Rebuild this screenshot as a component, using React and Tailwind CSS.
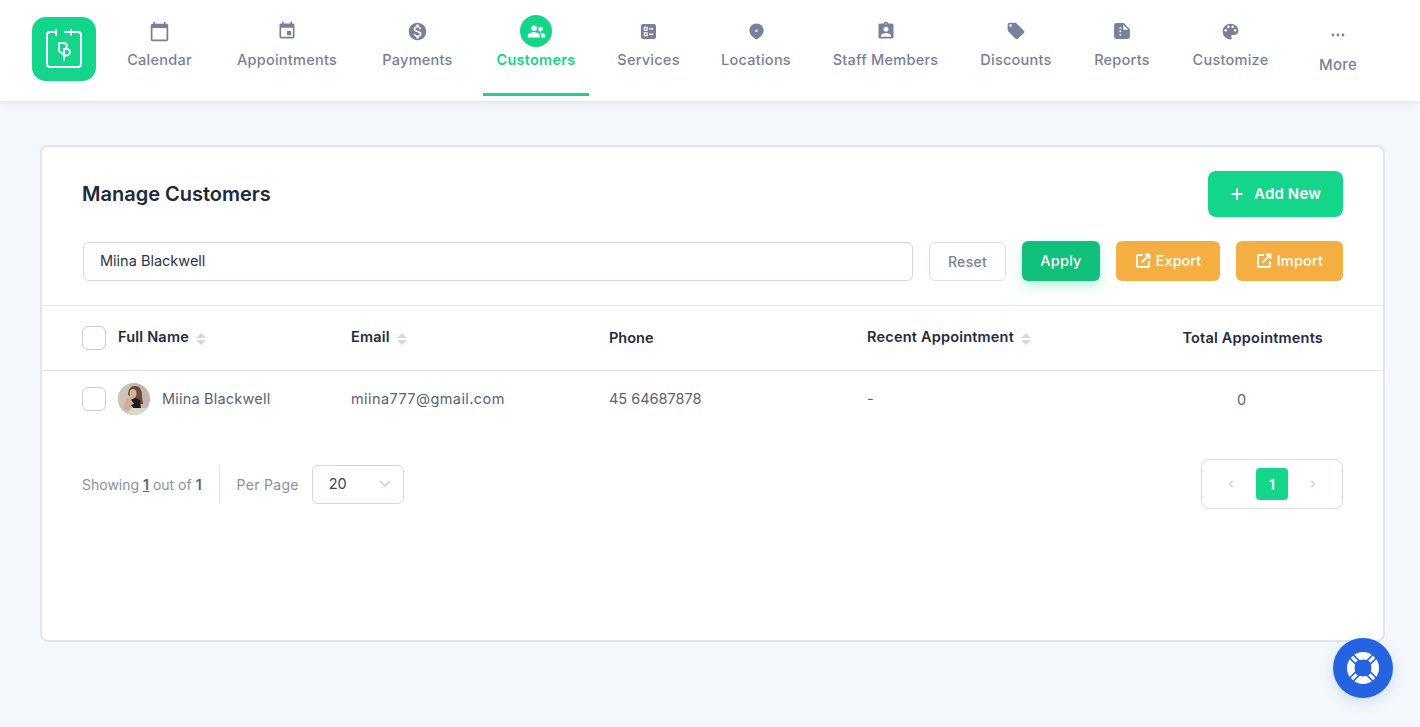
import React from "react";

const I = ({ d, className = "w-6 h-6", rule }) => (
  <svg viewBox="0 0 24 24" fill="currentColor" className={className}>
    <path d={d} fillRule={rule} clipRule={rule} />
  </svg>
);

const paths = {
  calendar: "M20 3h-1V1h-2v2H7V1H5v2H4c-1.1 0-2 .9-2 2v16c0 1.1.9 2 2 2h16c1.1 0 2-.9 2-2V5c0-1.1-.9-2-2-2zm0 18H4V8h16v13z",
  event: "M17 12h-5v5h5v-5zM16 1v2H8V1H6v2H5c-1.11 0-1.99.9-1.99 2L3 19c0 1.1.89 2 2 2h14c1.1 0 2-.9 2-2V5c0-1.1-.9-2-2-2h-1V1h-2zm3 18H5V8h14v11z",
  money: "M12 2C6.48 2 2 6.48 2 12s4.48 10 10 10 10-4.48 10-10S17.52 2 12 2zm1.41 16.09V20h-2.67v-1.93c-1.71-.36-3.16-1.46-3.27-3.4h1.96c.1 1.05.82 1.87 2.65 1.87 1.96 0 2.4-.98 2.4-1.59 0-.83-.44-1.61-2.67-2.14-2.48-.6-4.18-1.62-4.18-3.67 0-1.72 1.39-2.84 3.11-3.21V4h2.67v1.95c1.86.45 2.79 1.86 2.85 3.39H14.3c-.05-1.11-.64-1.87-2.22-1.87-1.5 0-2.4.68-2.4 1.64 0 .84.65 1.39 2.67 1.91s4.18 1.39 4.18 3.91c-.01 1.83-1.38 2.83-3.12 3.16z",
  people: "M9 4.500a3.500 3.500 0 1 1 0 7 3.500 3.500 0 0 1 0-7zM17 6a3 3 0 1 1 0 6 3 3 0 0 1 0-6zM9 13c3.500 0 7 1.500 7 4v2.500H1V17c0-2.500 4.500-4 8-4zM17 13.500c3 0 6 1.300 6 3.500v2.500h-5V17c0-1.400-.6-2.600-1.700-3.500z",
  services: "M5 2.500h14A2.500 2.500 0 0 1 21.500 5v14a2.500 2.500 0 0 1-2.500 2.500H5A2.500 2.500 0 0 1 2.500 19V5A2.500 2.500 0 0 1 5 2.500zM6 6v5h5V6H6zm1.500 1.500h2v2h-2v-2zM13 7.500V9.500h5V7.500h-5zM6 13v5h5v-5H6zm1.500 1.500h2v2h-2v-2zM13 14.500v2h5v-2h-5z",
  place: "M12 2C7 2 3 6 3 11c0 5.500 7 10 9 11 2-1 9-5.500 9-11 0-5-4-9-9-9zm0 7.500a1.500 1.500 0 1 1 0 3 1.500 1.500 0 0 1 0-3z",
  staff: "M19 3h-4.180C14.400 1.840 13.300 1 12 1c-1.300 0-2.400.840-2.820 2H5c-.140 0-.270.010-.400.040-.390.080-.740.280-1.010.550-.180.180-.330.400-.430.640-.100.230-.160.490-.160.770v14c0 .270.060.540.160.780s.250.450.430.640c.270.270.620.470 1.010.550.130.020.260.030.400.030h14c1.100 0 2-.900 2-2V5c0-1.100-.900-2-2-2zm-7-.250c.410 0 .750.340.750.750s-.340.750-.750.750-.750-.340-.750-.750.340-.750.750-.750zM12 7c1.660 0 3 1.340 3 3s-1.340 3-3 3-3-1.340-3-3 1.340-3 3-3zm6 12H6v-1.400c0-2 4-3.100 6-3.100s6 1.100 6 3.100V19z",
  tag: "M21.410 11.580l-9-9C12.050 2.220 11.550 2 11 2H4c-1.100 0-2 .900-2 2v7c0 .550.220 1.050.590 1.420l9 9c.360.360.860.580 1.410.580.550 0 1.050-.220 1.410-.590l7-7c.370-.360.590-.860.590-1.410 0-.550-.230-1.060-.590-1.420zM5.500 7C4.670 7 4 6.330 4 5.500S4.670 4 5.500 4 7 4.670 7 5.500 6.330 7 5.500 7z",
  report: "M5 2.500h9l7.500 7.500v9a2.500 2.500 0 0 1-2.500 2.500H5A2.500 2.500 0 0 1 2.500 19V5A2.500 2.500 0 0 1 5 2.500zM13.500 4.500v6h6l-6-6zM9 7.500v2h2v-2H9zM9 11.500v2h2v-2H9zM9 15.500v2h2v-2H9z",
  palette: "M12 3c-4.970 0-9 4.030-9 9s4.030 9 9 9c.830 0 1.500-.670 1.500-1.500 0-.390-.150-.740-.390-1.010-.230-.260-.380-.610-.380-.990 0-.830.670-1.500 1.500-1.500H16c2.760 0 5-2.240 5-5 0-4.420-4.030-8-9-8zm-5.500 9c-.830 0-1.500-.670-1.500-1.500S5.670 9 6.500 9 8 9.670 8 10.500 7.330 12 6.500 12zm3-4C8.670 8 8 7.330 8 6.500S8.670 5 9.500 5s1.500.670 1.500 1.500S10.330 8 9.500 8zm5 0c-.830 0-1.500-.670-1.500-1.500S13.670 5 14.500 5s1.500.670 1.500 1.500S15.330 8 14.500 8zm3 4c-.830 0-1.500-.670-1.500-1.500S16.670 9 17.500 9s1.500.670 1.500 1.500-.670 1.500-1.500 1.500z",
};

const nav = [
  { label: "Calendar", icon: "calendar", w: "w-[93px]", s: "w-[21px] h-[21px]" },
  { label: "Appointments", icon: "event", w: "w-[130px]", s: "w-5 h-5" },
  { label: "Payments", icon: "money", w: "w-[99px]", s: "w-[21px] h-[21px]" },
  { label: "Customers", icon: "people", w: "w-[106px]", active: true },
  { label: "Services", icon: "services", w: "w-[87px]", s: "w-[19px] h-[19px]" },
  { label: "Locations", icon: "place", w: "w-[96px]", s: "w-[19px] h-[19px]" },
  { label: "Staff Members", icon: "staff", w: "w-[131px]", s: "w-5 h-5" },
  { label: "Discounts", icon: "tag", w: "w-[98px]", s: "w-5 h-5" },
  { label: "Reports", icon: "report", w: "w-[82px]", s: "w-5 h-5" },
  { label: "Customize", icon: "palette", w: "w-[103px]", s: "w-[21px] h-[21px]" },
];

const Logo = () => (
  <div className="w-16 h-16 rounded-[14px] bg-[#14d68a] flex items-center justify-center shrink-0">
    <svg viewBox="0 0 64 64" className="w-16 h-16" fill="none" stroke="#fff" strokeWidth="2" strokeLinecap="round" strokeLinejoin="round">
      <path d="M24 15h-6a3 3 0 0 0-3 3v29a3 3 0 0 0 3 3h28a3 3 0 0 0 3-3V18a3 3 0 0 0-3-3H33" />
      <path d="M24 13v5M39 13v5" strokeWidth="1.800" />
      <path d="M31.500 26H27v8l5 4" strokeWidth="1.800" />
      <path d="M31.500 26c2.500 0 3.500 1.500 3.500 3 0 1.300-.8 2.300-2.500 3" strokeWidth="1.800" />
      <path d="M32.500 32c3-.5 5.500.5 5.500 3s-2.500 4-5.500 3.500M32 32v11" strokeWidth="1.800" />
    </svg>
  </div>
);

const Avatar = () => (
  <svg viewBox="0 0 32 32" className="w-8 h-8 rounded-full shrink-0">
    <rect width="32" height="32" fill="#bfb9ad" />
    <path d="M0 0h12v32H0z" fill="#c9c4ba" />
    <path d="M10 12c0-6 3-9 7-9 5 0 7 4 7 9 0 4 1 6 1 9h-5l-3-6-4-1z" fill="#6a4a38" />
    <ellipse cx="15" cy="10.500" rx="3.500" ry="4.500" fill="#d8b09a" />
    <path d="M12 17l5-2 5 2 1 9H11z" fill="#1b1b1e" />
    <path d="M6 25c0-4 1.500-8 3-10 2 0 4 1 5 3l2 3-3 1 4 5H6z" fill="#d4ab94" />
    <path d="M13 25h15v7H9z" fill="#dcd7cd" />
  </svg>
);

const Sort = () => (
  <svg viewBox="0 0 10 12" className="w-[10px] h-3 ml-[7px] shrink-0 mt-px" fill="#d3d7e3">
    <path d="M5 0l5 5H0zM5 12L0 7h10z" />
  </svg>
);

const Check = () => <span className="block w-6 h-6 rounded-md border border-[#c9ccd6] bg-white shrink-0" />;

const ExtIcon = () => (
  <svg viewBox="0 0 16 16" className="w-4 h-4 shrink-0" fill="none" stroke="#fff" strokeWidth="1.800">
    <path d="M8 2H3a1 1 0 0 0-1 1v10a1 1 0 0 0 1 1h10a1 1 0 0 0 1-1V8" />
    <path d="M6.500 9.500L14 2M10 1.500H14.500V6" />
  </svg>
);

const font = "[font-family:Inter,'Noto_Sans',sans-serif]";

export default function App() {
  return (
    <div className={`min-h-[727px] bg-[#f4f8fc] ${font} relative overflow-hidden`}>
      <header className="h-[101px] bg-white shadow-[0_2px_8px_rgba(100,116,150,0.14)] flex items-start pl-8 pt-[17px]">
        <Logo />
        <nav className="flex gap-4 ml-[17px] -mt-[17px]">
          {nav.map((n) => (
            <div
              key={n.label}
              className={`${n.w} h-[96px] flex flex-col items-center relative ${n.active ? "text-[#14d68a]" : "text-[#79819a]"}`}
            >
              <div className="h-[62px] flex flex-col items-center pt-[15px]">
                {n.active ? (
                  <span className="w-8 h-8 rounded-full bg-[#14d68a] flex items-center justify-center text-white">
                    <I d={paths.people} className="w-[19px] h-[19px]" />
                  </span>
                ) : (
                  <span className="w-8 h-8 flex items-center justify-center">
                    <I d={paths[n.icon]} className={n.s} />
                  </span>
                )}
              </div>
              <span className={`text-[14.500px] leading-5 -mt-3 whitespace-nowrap tracking-[0.25px] ${n.active ? "font-semibold" : "font-medium"}`}>
                {n.label}
              </span>
              {n.active && <span className="absolute left-0 right-0 bottom-0 h-[3px] bg-[#1fd28d]" />}
            </div>
          ))}
          <div className="w-[80px] flex flex-col items-center text-[#79819a]">
            <div className="h-[48px] flex items-end pb-[11px]">
              <svg viewBox="0 0 14 4" className="w-[14px] h-1" fill="currentColor">
                <circle cx="2" cy="2" r="1.400" />
                <circle cx="7" cy="2" r="1.400" />
                <circle cx="12" cy="2" r="1.400" />
              </svg>
            </div>
            <span className="text-[15px] leading-5 font-medium tracking-[0.25px] mt-[7px]">More</span>
          </div>
        </nav>
      </header>

      <main className="px-10 pt-[44px]">
        <section className="w-[1345px] h-[497px] bg-white rounded-lg border-2 border-[#dfe5f3]">
          <div className="flex items-center justify-between pl-10 pr-10 pt-6 h-[70px]">
            <h1 className="text-[20px] font-semibold text-[#1e293b] leading-7">Manage Customers</h1>
            <button className="w-[135px] h-[46px] rounded-lg bg-[#14d68a] text-white text-[15px] tracking-[0.15px] font-semibold flex items-center justify-center gap-[10px]">
              <svg viewBox="0 0 14 14" className="w-[14px] h-[14px]" stroke="#fff" strokeWidth="1.800" fill="none">
                <path d="M7 1v12M1 7h12" />
              </svg>
              Add New
            </button>
          </div>

          <div className="flex items-center pl-[41px] pr-10 mt-6 h-10">
            <div className="w-[830px] h-[39px] rounded-md border border-[#d3d6de] flex items-center px-4 text-[14.500px] text-[#2d3648]">
              Miina Blackwell
            </div>
            <button className="ml-4 w-[77px] h-[39px] rounded-md border border-[#dcdfe6] text-[14px] font-medium text-[#79819a] tracking-[0.3px]">Reset</button>
            <button className="ml-4 w-[78px] h-10 rounded-md bg-[#10c07b] text-white text-[14.500px] font-medium tracking-[0.2px] shadow-[0_5px_12px_rgba(20,214,138,0.3)]">Apply</button>
            <button className="ml-4 w-[104px] h-10 rounded-md bg-[#f5ae42] text-white text-[14.500px] font-medium flex items-center justify-center gap-[5px]">
              <ExtIcon />Export
            </button>
            <button className="ml-4 w-[107px] h-10 rounded-md bg-[#f5ae42] text-white text-[14.500px] font-medium tracking-[0.2px] flex items-center justify-center gap-[5px]">
              <ExtIcon />Import
            </button>
          </div>

          <div className="mt-6 border-t border-b border-t-[#e4e7ee] border-b-[#dcdfec] h-[66px] grid grid-cols-[269px_258px_258px_1fr] items-center pl-10 text-[14.500px] font-semibold text-[#252c40] tracking-[0.2px]">
            <div className="flex items-center">
              <Check />
              <span className="ml-3 -mt-[2px]">Full Name</span>
              <Sort />
            </div>
            <div className="flex items-center"><span className="-mt-[2px]">Email</span><Sort /></div>
            <div className="tracking-normal">Phone</div>
            <div className="flex items-center justify-between pr-[60px]">
              <span className="flex items-center"><span className="-mt-[2px]">Recent Appointment</span><Sort /></span>
              <span>Total Appointments</span>
            </div>
          </div>

          <div className="h-[56px] grid grid-cols-[269px_258px_258px_1fr] items-center pl-10 text-[14.500px] text-[#5a6275] tracking-[0.2px]">
            <div className="flex items-center">
              <Check />
              <span className="ml-3"><Avatar /></span>
              <span className="ml-3">Miina Blackwell</span>
            </div>
            <div className="tracking-[0.42px]">miina777@gmail.com</div>
            <div className="tracking-[0px]">45 64687878</div>
            <div className="flex items-center">
              <span className="w-[370px]">-</span>
              <span className="mt-px">0</span>
            </div>
          </div>

          <div className="flex items-start justify-between pl-10 pr-10 mt-[32px]">
            <div className="flex items-center h-[40px] mt-[5px] text-[14px] text-[#8b91a3]">
              <span>
                Showing <span className="underline font-semibold text-[#5a6275]">1</span> out of <span className="font-semibold text-[#5a6275]">1</span>
              </span>
              <span className="w-px h-[39px] bg-[#dfe2e9] mx-[17px]" />
              <span className="tracking-[0.3px]">Per Page</span>
              <div className="ml-[13px] w-[92px] h-[39px] rounded-md border border-[#d3d6de] flex items-center justify-between pl-4 pr-3 text-[#3a4256] text-[14.500px]">
                20
                <svg viewBox="0 0 12 8" className="w-3 h-2" fill="none" stroke="#c8ccd6" strokeWidth="1.300"><path d="M1 1l5 5 5-5" /></svg>
              </div>
            </div>
            <div className="w-[142px] h-[50px] rounded-lg border border-[#d6d9e0] flex items-center justify-center gap-[18px]">
              <svg viewBox="0 0 8 10" className="w-[6px] h-2" fill="none" stroke="#c5c8d2" strokeWidth="1.600"><path d="M6 1L2 5l4 4" /></svg>
              <span className="w-8 h-8 rounded bg-[#14d68a] text-white text-[14px] font-semibold flex items-center justify-center mx-1">1</span>
              <svg viewBox="0 0 8 10" className="w-[6px] h-2" fill="none" stroke="#c5c8d2" strokeWidth="1.600"><path d="M2 1l4 4-4 4" /></svg>
            </div>
          </div>
        </section>
      </main>

      <button className="absolute left-[1333px] top-[638px] w-[60px] h-[60px] rounded-full bg-[#2563e0] shadow-[0_4px_14px_rgba(37,99,224,0.18)] flex items-center justify-center">
        <svg viewBox="0 0 32 32" className="w-8 h-8">
          <circle cx="16" cy="16" r="16" fill="#fff" />
          <path d="M3 3l26 26M29 3L3 29" stroke="#2563e0" strokeWidth="6.500" />
          <path d="M4.900 4.900l4.700 4.700M27.100 4.900l-4.700 4.700M4.900 27.100l4.700-4.700M27.100 27.100l-4.700-4.700" stroke="#fff" strokeWidth="3.200" />
          <circle cx="16" cy="16" r="8.500" fill="#2563e0" />
        </svg>
      </button>
    </div>
  );
}
